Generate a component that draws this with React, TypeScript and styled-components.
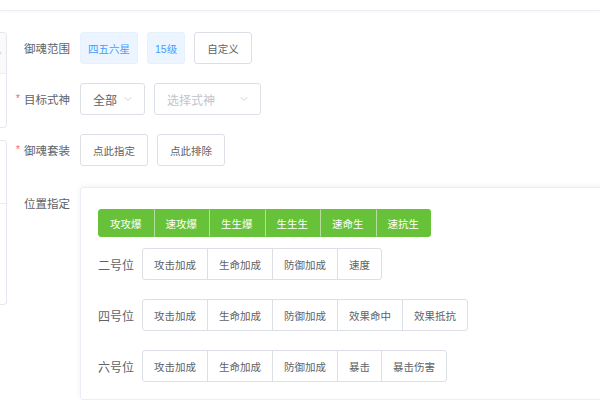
import styled, { createGlobalStyle } from "styled-components";
import { ChevronDown, ChevronRight } from "lucide-react";

const GlobalStyle = createGlobalStyle`
  html, body {
    margin: 0;
    padding: 0;
    background: #ffffff;
  }
  body {
    font-family: "Liberation Sans", "Noto Sans CJK SC", sans-serif;
    color: #606266;
  }
`;

const Page = styled.div`
  width: 600px;
  height: 400px;
  overflow: hidden;
  background: #ffffff;
`;

const TopBar = styled.div`
  height: 10px;
  border-bottom: 1px solid #ebeef5;
  box-shadow: 0 1px 3px rgba(0, 0, 0, 0.04);
`;

const Body = styled.div`
  display: flex;
  flex-direction: row;
  padding-top: 21px;
`;

const Side = styled.div`
  width: 8px;
  flex-shrink: 0;
  display: flex;
  flex-direction: column;
  gap: 12px;
`;

const SideCard = styled.div<{ $height: number }>`
  width: 7px;
  height: ${(p) => p.$height}px;
  box-sizing: border-box;
  border: 1px solid #e4e7ed;
  border-left: none;
  border-radius: 0 4px 4px 0;
  overflow: hidden;
  display: flex;
  flex-direction: column;
`;

const SideHead = styled.div<{ $height: number; $tinted?: boolean }>`
  height: ${(p) => p.$height}px;
  flex-shrink: 0;
  border-bottom: 1px solid #ebeef5;
  background: ${(p) => (p.$tinted ? "#fafafa" : "#ffffff")};
  display: flex;
  align-items: center;
  color: #c0c4cc;

  svg {
    margin-left: -5px;
  }
`;

const Form = styled.div`
  flex: 1;
  min-width: 0;
  display: flex;
  flex-direction: column;
  margin-right: -40px;
`;

const FormItem = styled.div<{ $top?: number }>`
  display: flex;
  flex-direction: row;
  align-items: flex-start;
  margin-top: ${(p) => p.$top ?? 0}px;
`;

const Label = styled.div`
  width: 72px;
  flex-shrink: 0;
  box-sizing: border-box;
  padding-right: 10px;
  text-align: right;
  font-size: 11.5px;
  line-height: 32px;
  color: #606266;
  font-family: "Noto Sans CJK SC", sans-serif;
`;

const Star = styled.span`
  color: #f56c6c;
  margin-right: 4px;
  font-family: "Liberation Sans", sans-serif;
  font-size: 11px;
  position: relative;
  top: -2px;
`;

const Controls = styled.div`
  display: flex;
  flex-direction: row;
  gap: 9px;
`;

const Tag = styled.div`
  height: 32px;
  box-sizing: border-box;
  padding: 0 7px;
  display: flex;
  align-items: center;
  background: #ecf5ff;
  border: 1px solid #e6f1fe;
  border-radius: 3px;
  color: #409eff;
  font-size: 10.5px;
`;

const Button = styled.div`
  height: 32px;
  box-sizing: border-box;
  padding: 0 12px;
  display: flex;
  align-items: center;
  background: #ffffff;
  border: 1px solid #dcdfe6;
  border-radius: 3px;
  color: #606266;
  font-size: 10.5px;
`;

const Select = styled.div<{ $width: number; $placeholder?: boolean }>`
  width: ${(p) => p.$width}px;
  height: 32px;
  box-sizing: border-box;
  padding: 0 10px 0 12px;
  display: flex;
  align-items: center;
  justify-content: space-between;
  border: 1px solid #dcdfe6;
  border-radius: 3px;
  font-size: 12px;
  color: ${(p) => (p.$placeholder ? "#c0c4cc" : "#606266")};

  svg {
    color: #c0c4cc;
  }
`;

const Panel = styled.div`
  flex: 1;
  border: 1px solid #ebeef5;
  border-radius: 3px;
  box-shadow: 0 -1px 5px rgba(0, 0, 0, 0.06);
  padding: 21px 0 17px 17px;
  display: flex;
  flex-direction: column;
`;

const Group = styled.div`
  display: flex;
  flex-direction: row;
`;

const GreenSeg = styled.div`
  height: 28px;
  box-sizing: border-box;
  padding: 0 11px;
  display: flex;
  align-items: center;
  background: #67c23a;
  border: 1px solid #67c23a;
  color: #ffffff;
  font-size: 10.5px;

  & + & {
    border-left-color: rgba(255, 255, 255, 0.5);
  }
  &:first-child {
    border-radius: 3px 0 0 3px;
  }
  &:last-child {
    border-radius: 0 3px 3px 0;
  }
`;

const PosRow = styled.div<{ $top: number }>`
  display: flex;
  flex-direction: row;
  align-items: center;
  margin-top: ${(p) => p.$top}px;
`;

const PosLabel = styled.div`
  width: 44px;
  flex-shrink: 0;
  font-size: 12px;
  color: #606266;
`;

const Seg = styled.div`
  height: 32px;
  box-sizing: border-box;
  padding: 0 11px;
  display: flex;
  align-items: center;
  background: #ffffff;
  border: 1px solid #dcdfe6;
  color: #606266;
  font-size: 10.5px;

  & + & {
    margin-left: -1px;
  }
  &:first-child {
    border-radius: 3px 0 0 3px;
  }
  &:last-child {
    border-radius: 0 3px 3px 0;
  }
`;

const suits = ["攻攻爆", "速攻爆", "生生爆", "生生生", "速命生", "速抗生"];

const positions = [
  { name: "二号位", opts: ["攻击加成", "生命加成", "防御加成", "速度"], top: 11 },
  { name: "四号位", opts: ["攻击加成", "生命加成", "防御加成", "效果命中", "效果抵抗"], top: 19 },
  { name: "六号位", opts: ["攻击加成", "生命加成", "防御加成", "暴击", "暴击伤害"], top: 19 },
];

export default function App() {
  return (
    <Page>
      <GlobalStyle />
      <TopBar />
      <Body>
        <Side>
          <SideCard $height={96}>
            <SideHead $height={40} $tinted>
              <ChevronRight size={10} strokeWidth={1.5} />
            </SideHead>
          </SideCard>
          <SideCard $height={165}>
            <SideHead $height={62} />
          </SideCard>
        </Side>
        <Form>
          <FormItem>
            <Label>御魂范围</Label>
            <Controls>
              <Tag>四五六星</Tag>
              <Tag>15级</Tag>
              <Button>自定义</Button>
            </Controls>
          </FormItem>
          <FormItem $top={19}>
            <Label>
              <Star>*</Star>目标式神
            </Label>
            <Controls>
              <Select $width={65}>
                全部
                <ChevronDown size={12} strokeWidth={1.5} />
              </Select>
              <Select $width={107} $placeholder>
                选择式神
                <ChevronDown size={12} strokeWidth={1.5} />
              </Select>
            </Controls>
          </FormItem>
          <FormItem $top={18}>
            <Label>
              <Star>*</Star>御魂套装
            </Label>
            <Controls>
              <Button>点此指定</Button>
              <Button>点此排除</Button>
            </Controls>
          </FormItem>
          <FormItem $top={20}>
            <Label>位置指定</Label>
            <Panel>
              <Group>
                {suits.map((s) => (
                  <GreenSeg key={s}>{s}</GreenSeg>
                ))}
              </Group>
              {positions.map((p) => (
                <PosRow key={p.name} $top={p.top}>
                  <PosLabel>{p.name}</PosLabel>
                  <Group>
                    {p.opts.map((o) => (
                      <Seg key={o}>{o}</Seg>
                    ))}
                  </Group>
                </PosRow>
              ))}
            </Panel>
          </FormItem>
        </Form>
      </Body>
    </Page>
  );
}
